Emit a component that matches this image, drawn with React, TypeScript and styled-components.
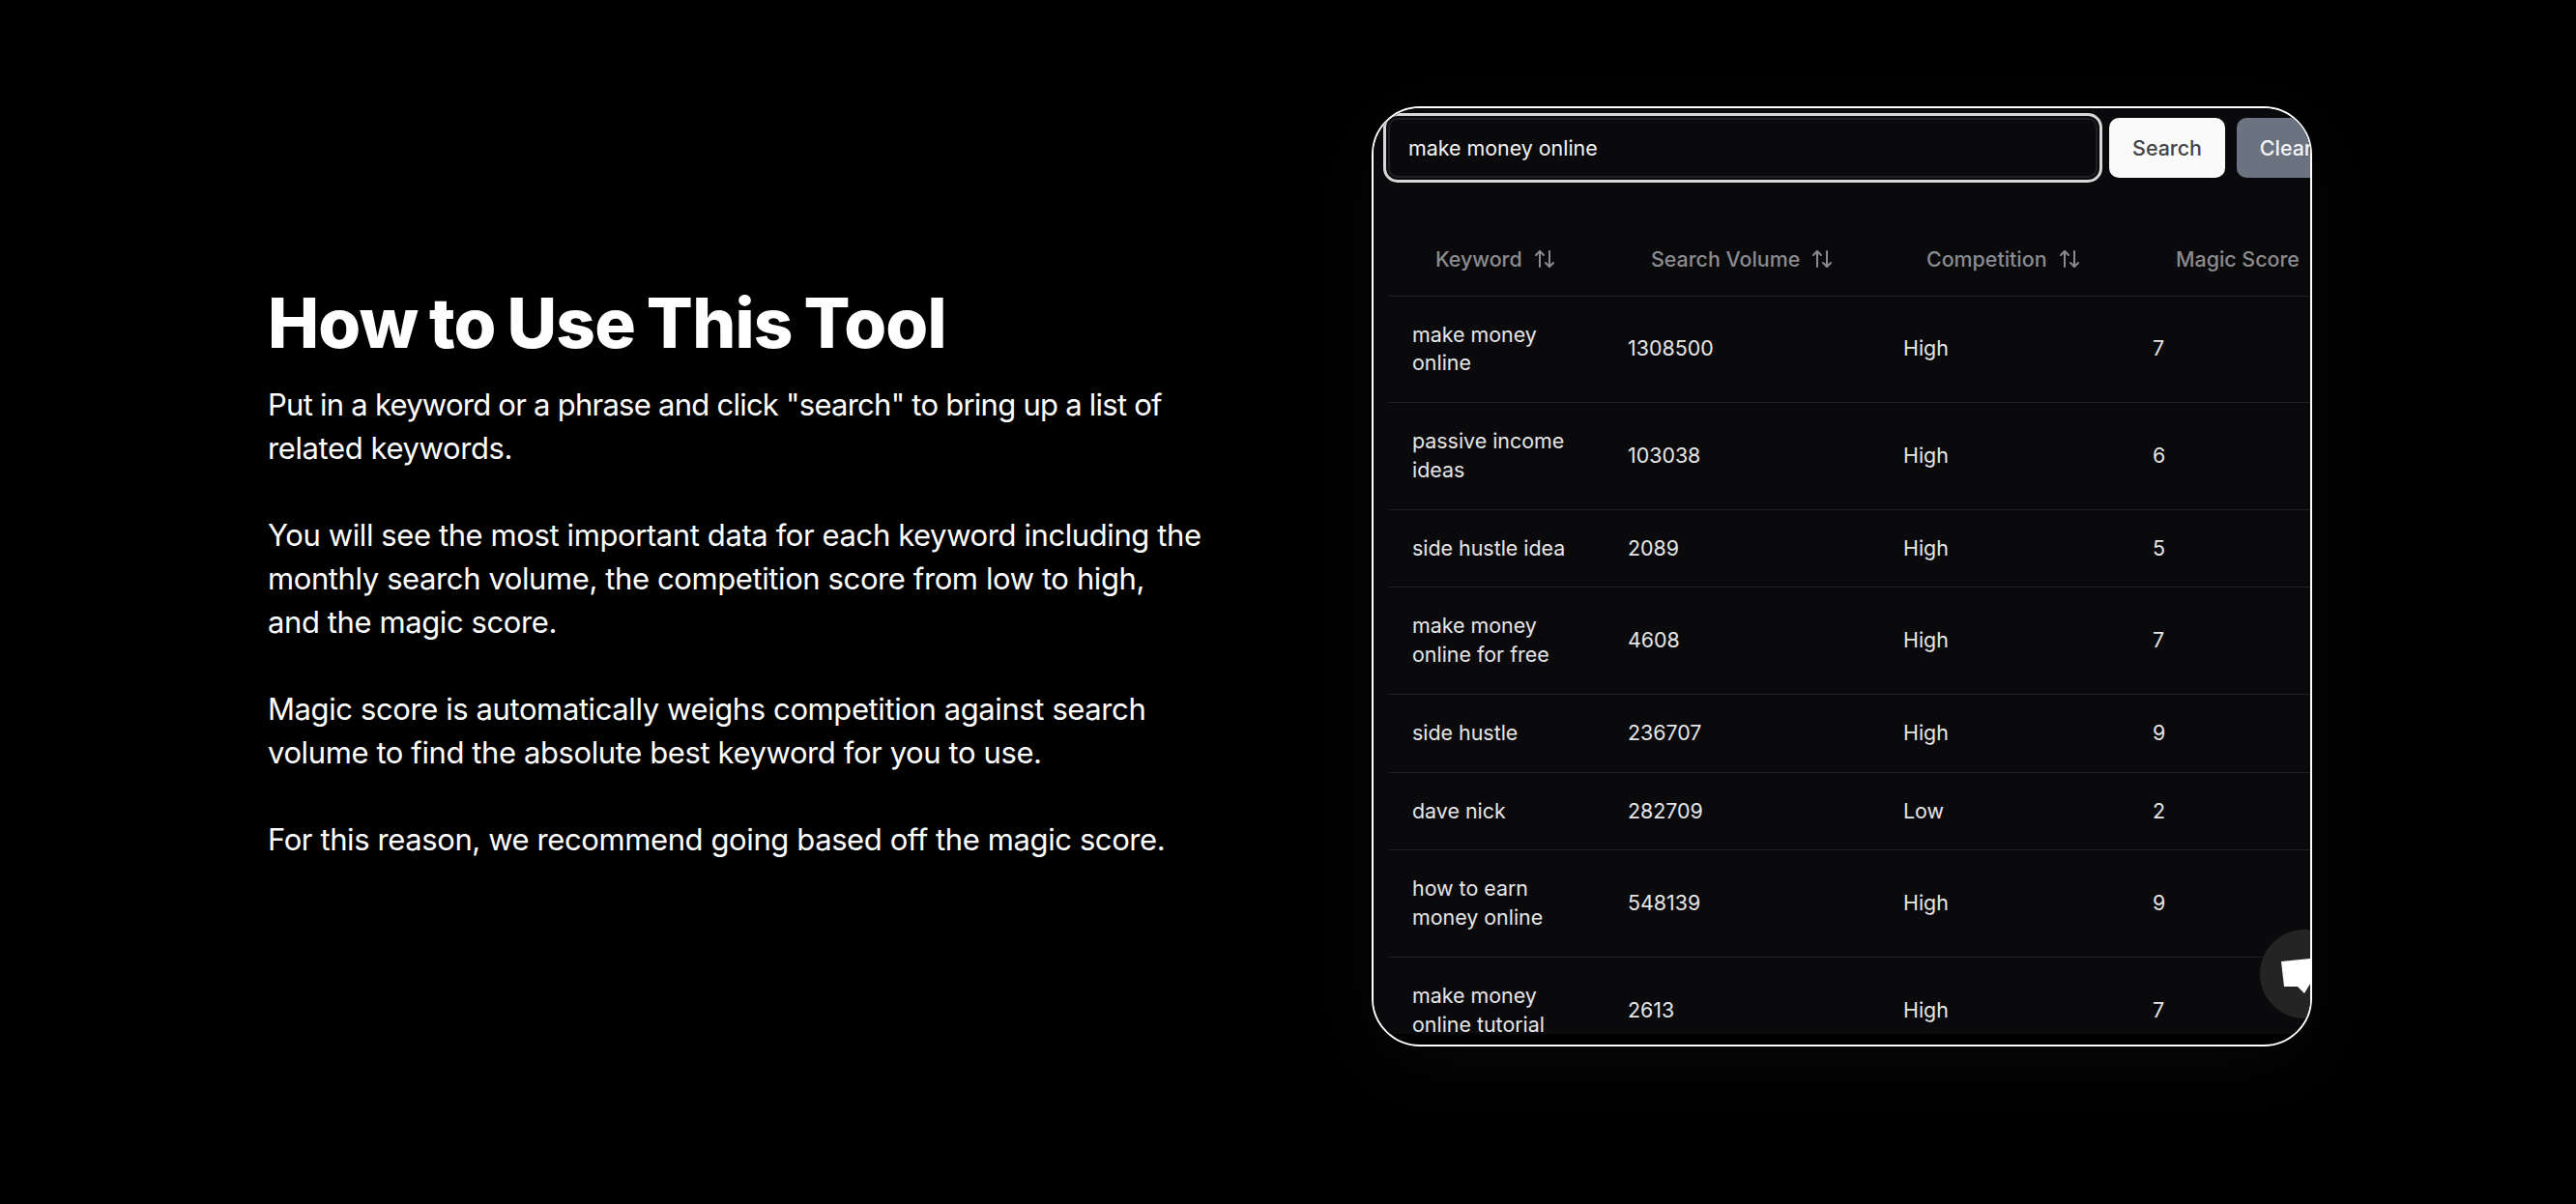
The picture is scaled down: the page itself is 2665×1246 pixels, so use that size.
import React from "react";
import styled, { createGlobalStyle } from "styled-components";
import { ArrowUpDown } from "lucide-react";

const rows = [
  { keyword: "make money online", volume: 1308500, competition: "High", score: 7 },
  { keyword: "passive income ideas", volume: 103038, competition: "High", score: 6 },
  { keyword: "side hustle idea", volume: 2089, competition: "High", score: 5 },
  { keyword: "make money online for free", volume: 4608, competition: "High", score: 7 },
  { keyword: "side hustle", volume: 236707, competition: "High", score: 9 },
  { keyword: "dave nick", volume: 282709, competition: "Low", score: 2 },
  { keyword: "how to earn money online", volume: 548139, competition: "High", score: 9 },
  { keyword: "make money online tutorial", volume: 2613, competition: "High", score: 7 },
];

const columns = [
  { label: "Keyword", sortable: true },
  { label: "Search Volume", sortable: true },
  { label: "Competition", sortable: true },
  { label: "Magic Score", sortable: false },
];

export default function App() {
  return (
    <Page>
      <GlobalStyle />
      <Copy>
        <Title>How to Use This Tool</Title>
        <Body>
          <Tight>Put in a keyword or a phrase and click "search" to bring up a list of</Tight> related keywords.
        </Body>
        <Body>
          You will see the most important data for each keyword including the monthly search volume, the competition
          score from low to high,
          <br />
          and the magic score.
        </Body>
        <Body>
          Magic score is automatically weighs competition against search volume to find the absolute best keyword for
          you to use.
        </Body>
        <Body>For this reason, we recommend going based off the magic score.</Body>
      </Copy>
      <Frame>
        <Screen>
          <Toolbar>
            <SearchInput readOnly value="make money online" />
            <SearchButton>Search</SearchButton>
            <ClearButton>Clear</ClearButton>
          </Toolbar>
          <Table>
            <colgroup>
              <col style={{ width: 223 }} />
              <col style={{ width: 285 }} />
              <col style={{ width: 258 }} />
              <col style={{ width: 260 }} />
            </colgroup>
            <thead>
              <tr>
                {columns.map((col) => (
                  <HeadCell key={col.label}>
                    <HeadLabel>
                      {col.label}
                      {col.sortable && <ArrowUpDown size={24} strokeWidth={2} />}
                    </HeadLabel>
                  </HeadCell>
                ))}
              </tr>
            </thead>
            <tbody>
              {rows.map((row) => (
                <tr key={row.keyword}>
                  <Cell>{row.keyword}</Cell>
                  <Cell>{row.volume}</Cell>
                  <Cell>{row.competition}</Cell>
                  <Cell>{row.score}</Cell>
                </tr>
              ))}
            </tbody>
          </Table>
        </Screen>
        <ChatBubble>
          <svg width="60" height="50" viewBox="0 0 60 50">
            <path d="M0 12 L30 9 L50 7 L50 35 L30 35 L24 45 L17 38 L3 38 Z" fill="#fff" />
          </svg>
        </ChatBubble>
      </Frame>
    </Page>
  );
}

const GlobalStyle = createGlobalStyle`
  html, body {
    margin: 0;
    background: #000;
  }
  * {
    box-sizing: border-box;
  }
`;

const Page = styled.div`
  display: flex;
  align-items: center;
  height: 1246px;
  padding: 0 0 53px 277px;
  background: #000;
  color: #fff;
  font-family: Inter, "Liberation Sans", sans-serif;
  overflow: hidden;
`;

const Copy = styled.div`
  width: 1142px;
  flex: none;
  padding-bottom: 11px;
`;

const Title = styled.h1`
  margin: 0 0 20px;
  font-size: 71px;
  line-height: 84px;
  font-weight: 800;
  letter-spacing: -0.011em;
  word-spacing: -3px;
`;

const Body = styled.p`
  width: 975px;
  margin: 0 0 45px;
  font-size: 31px;
  line-height: 45px;
  letter-spacing: -0.4px;

  &:last-child {
    margin-bottom: 0;
  }
`;

const Tight = styled.span`
  letter-spacing: -0.75px;
`;

const Frame = styled.div`
  position: relative;
  flex: none;
  width: 973px;
  height: 973px;
  border: 2px solid #fff;
  border-radius: 50px;
  overflow: hidden;
  background: #000;
  box-shadow: 0 20px 90px rgba(255, 255, 255, 0.03);
`;

const Screen = styled.div`
  height: 958px;
  padding-top: 10px;
  background: #0a0a0c;
  overflow: hidden;
`;

const Toolbar = styled.div`
  display: flex;
  gap: 12px;
  width: 1100px;
  height: 62px;
  padding-left: 15px;
`;

const SearchInput = styled.input`
  width: 734px;
  height: 62px;
  padding: 0 19px;
  border: 2px solid #1f2023;
  border-radius: 10px;
  outline: none;
  background: #0a0a0c;
  box-shadow: 0 0 0 2px #0a0a0c, 0 0 0 5px #d8d8d8;
  color: #f4f4f4;
  font: 400 21.4px Inter, sans-serif;
`;

const SearchButton = styled.button`
  width: 120px;
  height: 62px;
  border: 0;
  border-radius: 10px;
  background: #fafafa;
  color: #444;
  font: 500 21.4px Inter, sans-serif;
`;

const ClearButton = styled(SearchButton)`
  width: 102px;
  background: #6b7280;
  color: #f4f4f5;
`;

const Table = styled.table`
  width: 1026px;
  margin: 47px 0 0 16px;
  border-collapse: collapse;
  table-layout: fixed;
`;

const HeadCell = styled.th`
  height: 75px;
  padding: 0 0 0 48px;
  border-bottom: 1px solid #202124;
  text-align: left;
  color: #8a8b8f;
  font-size: 21.4px;
  font-weight: 500;
  white-space: nowrap;
`;

const HeadLabel = styled.span`
  display: inline-flex;
  align-items: center;
  gap: 11px;
`;

const Cell = styled.td`
  padding: 25px 24px;
  border-bottom: 1px solid #202124;
  color: #e6e6e7;
  font-size: 21.4px;
  line-height: 29.75px;
`;

const ChatBubble = styled.div`
  position: absolute;
  left: 917px;
  top: 850px;
  display: flex;
  align-items: center;
  justify-content: flex-start;
  width: 92px;
  height: 92px;
  padding-left: 22px;
  border-radius: 50%;
  background: #242424;
`;
